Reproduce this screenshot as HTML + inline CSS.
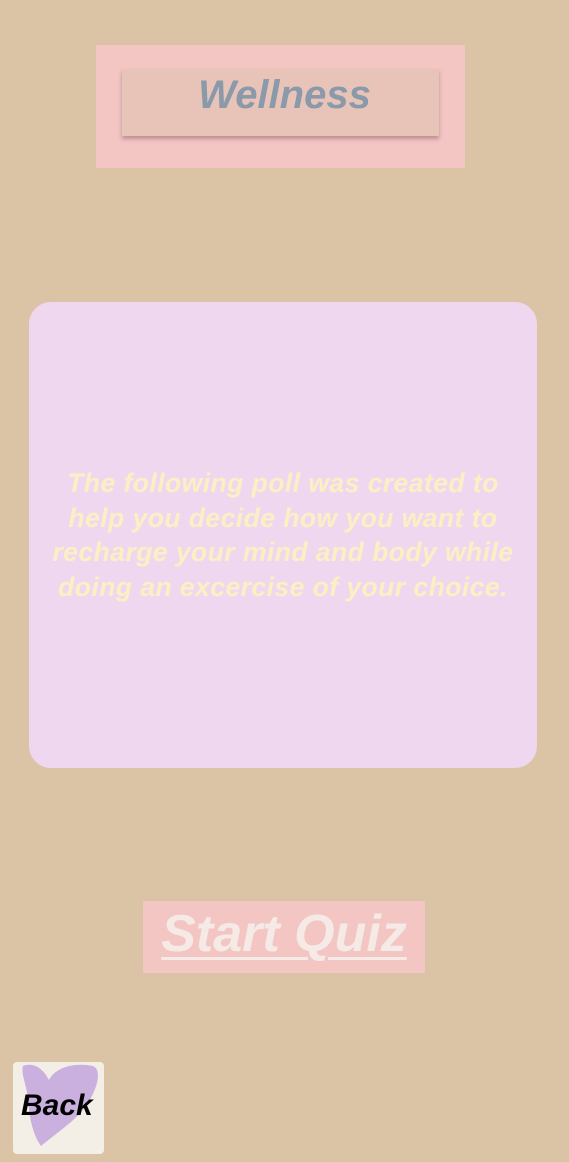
<!DOCTYPE html>
<html><head><style>
body{margin:0;width:569px;height:1162px;background:#dbc3a5;position:relative;overflow:hidden;font-family:"Liberation Sans",sans-serif;font-style:italic;font-weight:bold}
.outer{position:absolute;left:96px;top:45px;width:369px;height:123px;background:#f3c6c4}
.inner{position:absolute;left:122px;top:69px;width:317px;height:67px;background:#e8c4b8;box-shadow:0 3px 4px rgba(120,80,80,.45);text-align:center;line-height:52px;font-size:40px;color:#8a9aaa;padding-left:8px;box-sizing:border-box}
.card{position:absolute;left:29px;top:302px;width:508px;height:466px;background:#efd8ef;border-radius:22px;display:flex;align-items:center;justify-content:center;text-align:center;color:#fbefc4;font-size:26.5px;letter-spacing:0.45px;line-height:34.5px;white-space:nowrap}
.start{position:absolute;left:143px;top:901px;width:282px;height:72px;background:#f3c6c4;text-align:center;color:#f5eae6;font-size:52px;line-height:66px}
.start span{text-decoration:underline;text-decoration-thickness:3px;text-underline-offset:6px}
.back{position:absolute;left:13px;top:1062px;width:91px;height:92px;background:#f3efe6;border-radius:4px;overflow:hidden}
.back b{position:absolute;left:8px;top:27px;font-size:30px;color:#000}
</style></head><body>
<div class="outer"></div>
<div class="inner">Wellness</div>
<div class="card"><div>The following poll was created to<br>help you decide how you want to<br>recharge your mind and body while<br>doing an excercise of your choice.</div></div>
<div class="start"><span>Start Quiz</span></div>
<div class="back">
<svg width="91" height="92" style="position:absolute;left:0;top:0"><path d="M10 4 C20 0 30 6 36 18 C42 6 60 0 80 4 C90 8 84 30 70 48 C60 60 45 70 28 84 C18 70 16 50 14 30 C12 20 8 10 10 4Z" fill="#c9b0de"/></svg>
<b>Back</b>
</div>
</body></html>
